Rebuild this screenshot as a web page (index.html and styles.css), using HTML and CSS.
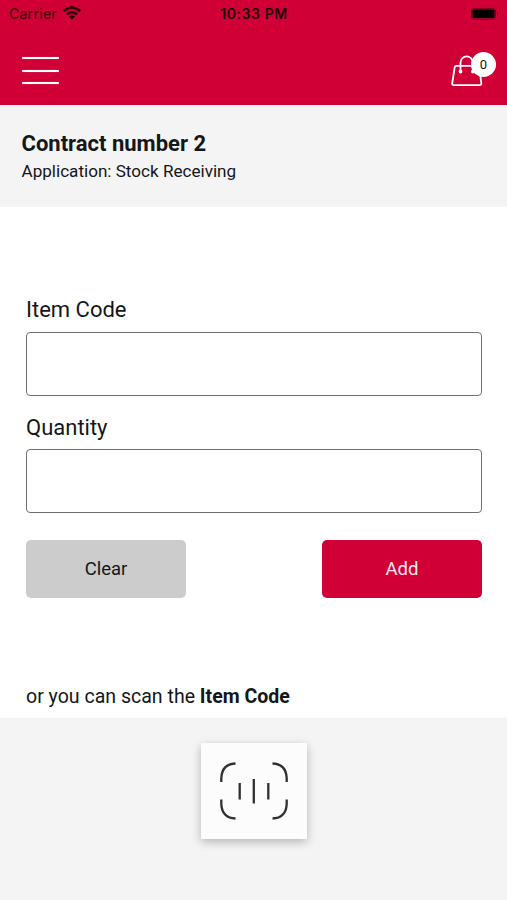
FILE: index.html
```html
<!DOCTYPE html>
<html lang="en">
<head>
<meta charset="utf-8">
<title>Stock Receiving</title>
<link rel="stylesheet" href="styles.css">
</head>
<body>
<header class="top">
  <div class="status">
    <div class="carrier"><span class="carrier-name">Carrier</span>
      <svg class="wifi" viewBox="0 0 18 14"><path d="M0 4.3Q9-3.7 18 4.3L16.3 6.1Q9-.4 1.7 6.1Z"/><path d="M3 7.4Q9 2.2 15 7.4L13.2 9.2Q9 5.8 4.8 9.2Z"/><path d="M6 10.5Q9 8 12 10.5L9 13.6Z"/></svg>
    </div>
    <span class="time">10:33 PM</span>
    <svg class="battery" viewBox="0 0 28 12"><rect x=".5" y=".5" width="24" height="10.5" rx="2.5" fill="none" stroke="#76001d"/><rect x="1.5" y="1.5" width="22" height="8.6" rx="1"/><path d="M26 3.5q3 2.2 0 4.5z" fill="#76001d"/></svg>
  </div>
  <nav class="bar">
    <div class="menu"><span></span><span></span><span></span></div>
    <div class="bag">
      <svg viewBox="0 0 32 34"><path d="M5.5 11.9H26.5Q28 11.9 28.3 13.3L30.3 29.3Q30.5 31.2 28.5 31.2H3Q1 31.2 1.2 29.3L3.7 13.3Q4 11.9 5.5 11.9Z"/><path d="M9.5 17.5V9a6.2 6.7 0 0 1 12.4 0V17.5"/><circle cx="9.5" cy="17.5" r="1"/><circle cx="21.9" cy="17.5" r="1"/></svg>
      <span class="badge">0</span>
    </div>
  </nav>
</header>
<section class="contract">
  <h1>Contract number 2</h1>
  <p>Application: Stock Receiving</p>
</section>
<main class="form">
  <label for="code">Item Code</label>
  <input id="code" type="text">
  <label for="qty">Quantity</label>
  <input id="qty" type="text">
  <div class="actions">
    <button class="clear">Clear</button>
    <button class="add">Add</button>
  </div>
  <p class="hint"><span>or you can scan the <b>Item Code</b></span></p>
</main>
<footer class="scan">
  <button class="scan-button" aria-label="Scan">
    <svg viewBox="0 0 68 58"><path d="M1.3 20V16Q2 2 15.5 1.5M52.5 1.5Q66 2 66.7 16V20M1.3 37.5V42Q2 56 15.5 56.5M52.5 56.5Q66 56 66.7 42V37.5M19.7 21V37.5M33.8 17V41.5M48.3 21V37.5"/></svg>
  </button>
</footer>
</body>
</html>
```
FILE: styles.css
```css
* { box-sizing: border-box; }
body {
  margin: 0;
  height: 900px;
  display: flex;
  flex-direction: column;
  font-family: Roboto, sans-serif;
  color: #141617;
  background: #fff;
}
h1, p { margin: 0; }
.top { height: 105px; background: #d00036; }
.status {
  height: 28px;
  padding: 0 8px 0 9px;
  display: grid;
  grid-template-columns: 1fr auto 1fr;
  align-items: center;
  font-family: Inter, sans-serif;
  color: #240009;
}
.carrier { display: flex; align-items: center; gap: 6px; }
.carrier-name { font-size: 14px; line-height: 28px; letter-spacing: .2px; font-weight: 500; color: #50000f; }
.wifi { width: 18px; height: 14px; fill: #240009; margin-top: -2px; }
.time { font-size: 14px; font-weight: 600; line-height: 28px; letter-spacing: .6px; }
.battery { width: 28px; height: 12px; justify-self: end; }
.bar {
  height: 77px;
  padding: 24px 11px 0 22px;
  display: flex;
  justify-content: space-between;
}
.menu { width: 37px; padding-top: 5px; display: flex; flex-direction: column; gap: 10px; }
.menu span { height: 2px; border-radius: 1px; background: #fff; box-shadow: 0 0 1px rgba(255, 255, 255, .6); }
.menu span + span { margin-top: .5px; }
.bag { position: relative; width: 45px; height: 36px; }
.bag svg { display: block; width: 32px; height: 34px; margin-top: 2px; fill: none; stroke: #fff; stroke-width: 1.8; stroke-linecap: round; }
.badge {
  position: absolute;
  top: 0;
  right: 0;
  width: 25px;
  height: 25px;
  border-radius: 50%;
  background: #fff;
  font-size: 13px;
  line-height: 25px;
  text-align: center;
}
.contract { height: 102px; padding: 25px 21.5px 0; background: #f4f4f4; }
.contract h1 { font-size: 22px; line-height: 28px; font-weight: 700; }
.contract p { font-size: 17.1px; line-height: 26px; }
.form { height: 511px; padding: 89px 25px 0 26px; display: flex; flex-direction: column; }
.form label { font-size: 22px; line-height: 28px; margin-bottom: 7.5px; }
.form input {
  width: 100%;
  height: 64px;
  margin-bottom: 18px;
  border: 1.5px solid #707070;
  border-radius: 4px;
  background: #fff;
}
.actions { display: flex; justify-content: space-between; margin-top: 9px; }
.actions button {
  width: 160px;
  height: 58px;
  border: 0;
  border-radius: 5px;
  font: 18.5px Roboto, sans-serif;
  color: #141617;
}
.actions .clear { background: #ccc; }
.actions .add { background: #d00036; color: #ffe9ee; }
.hint { margin-top: 85px; font-size: 19.55px; line-height: 28px; }
.scan { flex: 1; padding-top: 25px; background: #f4f4f4; text-align: center; }
.scan-button {
  width: 106px;
  height: 96px;
  padding: 0;
  border: 0;
  background: #fcfcfc;
  box-shadow: 0 3px 9px rgba(0, 0, 0, .26);
}
.scan-button svg { display: block; width: 68px; height: 58px; margin: 0 auto; fill: none; stroke: #303030; stroke-width: 2.3; stroke-linecap: butt; }
```
